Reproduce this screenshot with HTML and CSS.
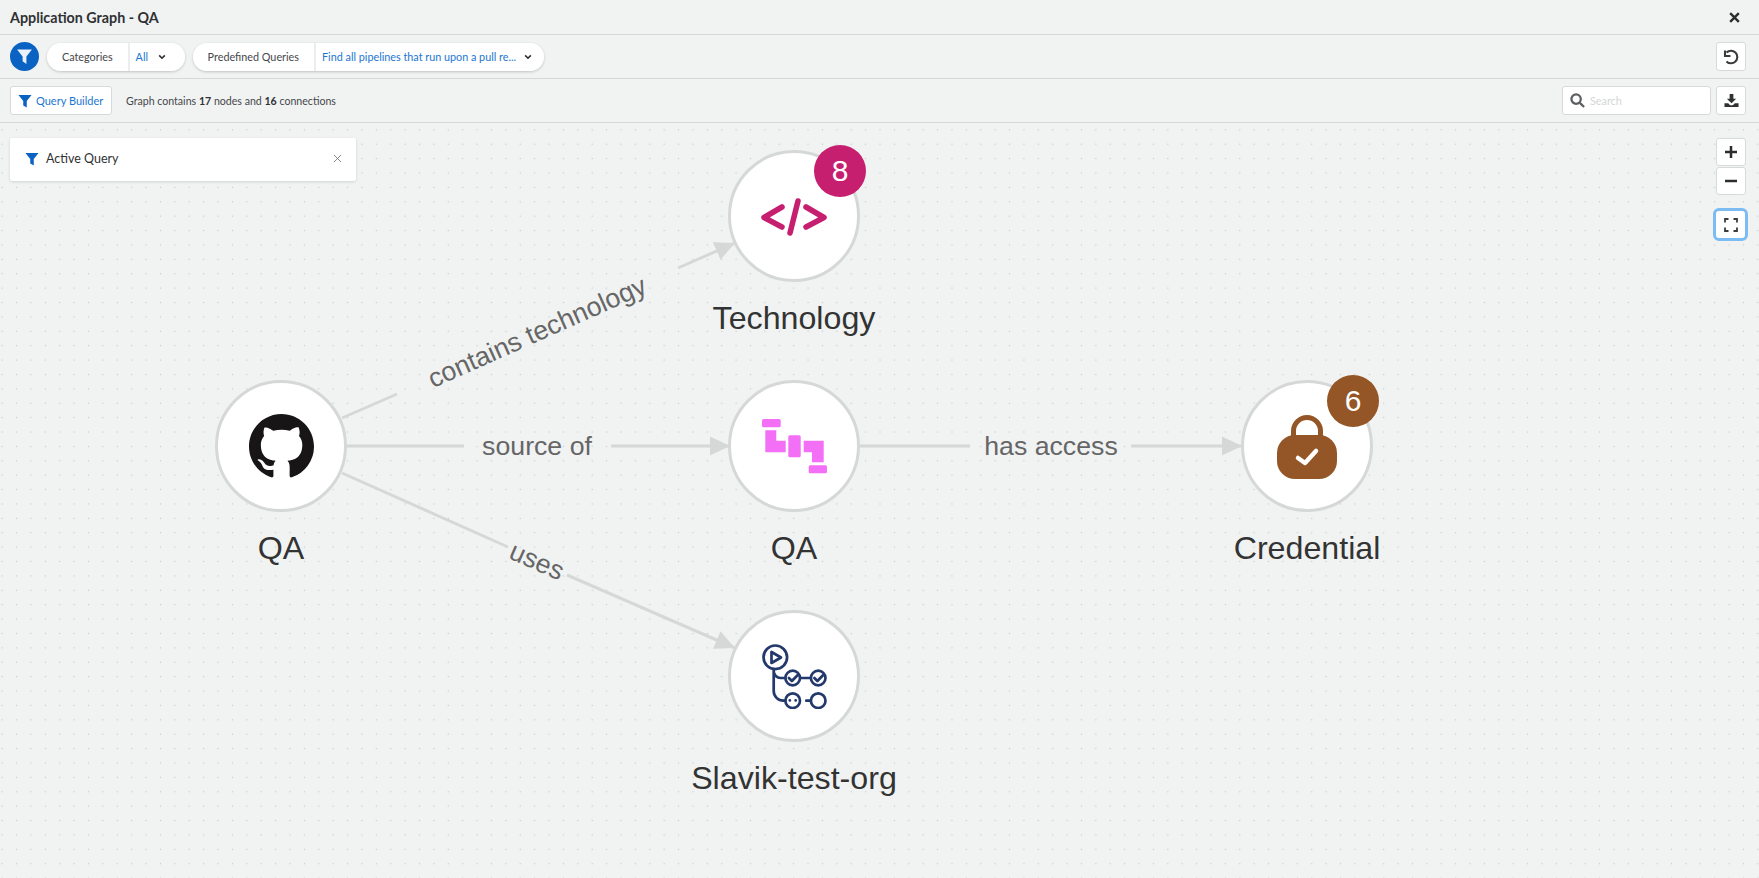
FILE: index.html
```html
<!DOCTYPE html>
<html lang="en">

<head>
    <meta charset="UTF-8">
    <title>Application Graph - QA</title>
    <link rel="stylesheet" href="styles.css">
</head>

<body>
    <header class="title-bar">
        <h1>Application Graph - QA</h1>
        <svg class="close-icon" viewBox="0 0 12 12"><path d="M2 2l8 8M10 2l-8 8"/></svg>
    </header>

    <div class="toolbar filter-bar">
        <span class="filter-round">
            <svg viewBox="0 0 16 16"><path d="M1 1.500h14L9.800 8v7L6.200 12.500V8z"/></svg>
        </span>
        <div class="pill">
            <span class="pill-label">Categories</span>
            <span class="pill-value pill-all">All <svg class="chev" viewBox="0 0 10 6"><path d="M1.500 1l3.500 3.500L8.500 1"/></svg></span>
        </div>
        <div class="pill">
            <span class="pill-label">Predefined Queries</span>
            <span class="pill-value pill-query">Find all pipelines that run upon a pull re... <svg class="chev" viewBox="0 0 10 6"><path d="M1.500 1l3.500 3.500L8.500 1"/></svg></span>
        </div>
        <button class="icon-btn push-right">
            <svg viewBox="0 0 16 16" class="line-icon"><path d="M3.500 3.600A6.300 6.300 0 1 1 3.500 12.400"/><path d="M2 1.500V7h5.500"/></svg>
        </button>
    </div>

    <div class="toolbar query-bar">
        <button class="builder-btn">
            <svg class="funnel" viewBox="0 0 16 16"><path d="M.5 1h15L10 8v7.500L6 13V8z"/></svg>
            Query Builder
        </button>
        <p class="graph-count">Graph contains <b>17</b> nodes and <b>16</b> connections</p>
        <div class="search push-right">
            <svg viewBox="0 0 16 16"><circle cx="6.500" cy="6.500" r="5"/><path d="M10.500 10.500l4.500 4.500"/></svg>
            <span>Search</span>
        </div>
        <button class="icon-btn">
            <svg viewBox="0 0 16 16" class="solid-icon"><path d="M6 1h4v5h3L8 11 3 6h3z"/><path d="M0.5 11h4l2 2h3l2-2h4v4h-15z"/></svg>
        </button>
    </div>

    <main class="canvas">
        <div class="query-card">
            <svg class="funnel" viewBox="0 0 16 16"><path d="M.5 1h15L10 8v7.500L6 13V8z"/></svg>
            <span>Active Query</span>
            <svg class="card-close" viewBox="0 0 10 10"><path d="M1 1l8 8M9 1L1 9"/></svg>
        </div>

        <div class="zoom-controls">
            <div class="zoom-pair">
                <button class="zoom-btn"><svg viewBox="0 0 14 14"><path d="M7 1v12M1 7h12"/></svg></button>
                <button class="zoom-btn"><svg viewBox="0 0 14 14"><path d="M1 7h12"/></svg></button>
            </div>
            <button class="zoom-btn fit-btn"><svg viewBox="0 0 14 14"><path d="M1 4.500V1h3.500M9.500 1H13v3.500M13 9.500V13H9.500M4.500 13H1V9.500"/></svg></button>
        </div>

        <!-- edges, coordinates are relative to the canvas -->
        <svg class="edges" viewBox="0 0 1759 756">
            <defs>
                <marker id="arrow" markerWidth="22" markerHeight="20" refX="20" refY="10" orient="auto" markerUnits="userSpaceOnUse">
                    <path d="M0 0.500L20 10L0 19.500z"/>
                </marker>
            </defs>
            <path d="M342 295L397 271"/>
            <path d="M678 145L735 120" marker-end="url(#arrow)"/>
            <path d="M346 323H464"/>
            <path d="M611 323H730" marker-end="url(#arrow)"/>
            <path d="M859 323H970"/>
            <path d="M1131 323H1242" marker-end="url(#arrow)"/>
            <path d="M342 350L508 424"/>
            <path d="M567 452L735 525" marker-end="url(#arrow)"/>
        </svg>

        <span class="edge-label label-contains">contains technology</span>
        <span class="edge-label label-source">source of</span>
        <span class="edge-label label-access">has access</span>
        <span class="edge-label label-uses">uses</span>

        <div class="node node-repo">
            <div class="disc">
                <svg viewBox="0 0 16 16" class="icon-github"><path d="M8 0C3.580 0 0 3.580 0 8c0 3.540 2.290 6.530 5.470 7.590.4.070.55-.17.55-.38 0-.19-.01-.82-.01-1.490-2.010.37-2.530-.49-2.690-.94-.09-.23-.48-.94-.82-1.130-.28-.15-.68-.52-.01-.53.63-.01 1.080.58 1.230.82.72 1.210 1.870.87 2.330.66.07-.52.28-.87.51-1.070-1.780-.2-3.640-.89-3.640-3.950 0-.87.31-1.590.82-2.150-.08-.2-.36-1.020.08-2.120 0 0 .67-.21 2.200.82.64-.18 1.320-.27 2-.27s1.360.09 2 .27c1.530-1.040 2.200-.82 2.200-.82.44 1.100.16 1.920.08 2.120.51.56.82 1.270.82 2.150 0 3.070-1.870 3.750-3.650 3.950.29.25.54.73.54 1.480 0 1.070-.01 1.930-.01 2.200 0 .21.15.46.55.38A8.010 8.010 0 0 0 16 8c0-4.420-3.580-8-8-8z"/></svg>
            </div>
            <span class="node-name">QA</span>
        </div>

        <div class="node node-tech">
            <div class="disc">
                <svg viewBox="0 0 66 38" class="icon-code"><path d="M21 9L3 19.500 21 29M45 9l18 10.500L45 29M37 3L29 35"/></svg>
                <span class="badge">8</span>
            </div>
            <span class="node-name">Technology</span>
        </div>

        <div class="node node-pipe">
            <div class="disc">
                <svg viewBox="0 0 65 55" class="icon-pipe"><rect width="18.700" height="8.300" rx="1.500"/><path d="M3.300 11.300h11v10.400h9.400v11.600H3.300z"/><rect x="26.300" y="16.300" width="12.400" height="22" rx="1.500"/><path d="M41.700 21.700h20v21.600H50v-10h-8.300z"/><rect x="46.700" y="46.300" width="18.300" height="8" rx="1.500"/></svg>
            </div>
            <span class="node-name">QA</span>
        </div>

        <div class="node node-cred">
            <div class="disc">
                <svg viewBox="0 0 60 64" class="icon-lock"><path class="shackle" d="M16.500 24V16a13.500 13.500 0 0 1 27 0v8"/><rect y="20" width="60" height="44" rx="18"/><path class="tick" d="M21 43l7 5 11-12"/></svg>
                <span class="badge badge-cred">6</span>
            </div>
            <span class="node-name">Credential</span>
        </div>

        <div class="node node-org">
            <div class="disc">
                <svg viewBox="0 0 65 65" class="icon-actions">
                    <circle cx="13.300" cy="13.300" r="11.800"/><path d="M9.500 8v11l9.500-5.500z"/>
                    <path d="M11.700 25v22a9.700 9.700 0 0 0 9.700 9.700h1.600M11.700 27a7 7 0 0 0 7 7h4.500"/>
                    <circle cx="30.700" cy="34" r="7.300"/><path d="M26.900 34l3 3 5.600-5.800"/>
                    <path d="M38.700 34h10"/>
                    <circle cx="56.200" cy="34" r="7.300"/><path d="M52.400 34l3 3 5.600-5.800"/>
                    <circle cx="30.700" cy="56.700" r="7.300"/><path d="M27.800 56.400h.1M33.600 56.400h.1"/>
                    <path d="M44.300 56.700h4.400"/>
                    <circle cx="56.200" cy="56.700" r="7.300"/>
                </svg>
            </div>
            <span class="node-name">Slavik-test-org</span>
        </div>
    </main>
</body>

</html>
```

FILE: styles.css
```css
* {
    box-sizing: border-box;
}

html,
body {
    height: 100%;
}

body {
    margin: 0;
    display: flex;
    flex-direction: column;
    overflow: hidden;
    background-color: #f1f3f3;
    color: #2f3133;
    font-family: Lato, Arial, sans-serif;
    font-size: 10.800px;
}

button {
    font-family: inherit;
    cursor: pointer;
}

.title-bar {
    height: 35px;
    flex: none;
    display: flex;
    align-items: center;
    justify-content: space-between;
    padding: 0 18px 0 10px;
    border-bottom: 1px solid #d6d8d8;
}

.title-bar h1 {
    margin: 0;
    font-size: 14.300px;
    font-weight: 700;
}

.close-icon {
    width: 13px;
    height: 13px;
    fill: none;
    stroke: #2a2c2e;
    stroke-width: 2.200;
}

.toolbar {
    flex: none;
    display: flex;
    align-items: center;
    padding: 0 13px 0 10px;
    border-bottom: 1px solid #d6d8d8;
}

.filter-bar {
    height: 44px;
    gap: 8px;
}

.query-bar {
    height: 44px;
}

.push-right {
    margin-left: auto;
}

.filter-round {
    width: 29px;
    height: 29px;
    border-radius: 50%;
    background-color: #0a63c2;
    display: flex;
    align-items: center;
    justify-content: center;
}

.filter-round svg {
    width: 17px;
    height: 17px;
    fill: #e9f1fa;
}

.pill {
    height: 28px;
    display: flex;
    gap: 2px;
    border-radius: 14px;
    overflow: hidden;
    box-shadow: 0 1px 3px rgba(0, 0, 0, 0.2);
    background-color: #eceeee;
}

.pill-label,
.pill-value {
    display: flex;
    align-items: center;
    white-space: nowrap;
    background-color: #fff;
}

.pill-label {
    padding: 0 15px 0 15px;
    color: #45474a;
}

.pill-value {
    justify-content: space-between;
    color: #1b76d2;
    padding-left: 6px;
}

.pill-all {
    width: 55px;
    padding-right: 19px;
}

.pill-query {
    width: 228px;
    padding-right: 12px;
}

.chev {
    width: 8px;
    height: 6px;
    flex: none;
    fill: none;
    stroke: #2a2c2e;
    stroke-width: 2;
}

.icon-btn {
    width: 30px;
    height: 29px;
    padding: 0;
    display: flex;
    align-items: center;
    justify-content: center;
    background-color: #fff;
    border: 1px solid #d8dada;
    border-radius: 3px;
}

.line-icon {
    width: 16px;
    height: 16px;
    fill: none;
    stroke: #3a3c3e;
    stroke-width: 2.100;
}

.solid-icon {
    width: 15px;
    height: 15px;
    fill: #2f3133;
}

.builder-btn {
    width: 102px;
    height: 29px;
    padding: 0 0 0 7px;
    display: flex;
    align-items: center;
    gap: 4px;
    white-space: nowrap;
    color: #1b76d2;
    font-size: 11px;
    background-color: #fff;
    border: 1px solid #d8dada;
    border-radius: 3px;
}

.funnel {
    width: 14px;
    height: 14px;
    flex: none;
    fill: #0a63c2;
}

.graph-count {
    margin: 0 0 0 14px;
    font-size: 10.600px;
    color: #45474a;
}

.graph-count b {
    color: #2f3133;
}

.search {
    width: 149px;
    height: 29px;
    display: flex;
    align-items: center;
    gap: 5px;
    padding-left: 7px;
    margin-right: 5px;
    color: #d4d6d6;
    background-color: #fff;
    border: 1px solid #d8dada;
    border-radius: 3px;
}

.search svg {
    width: 15px;
    height: 15px;
    fill: none;
    stroke: #5c5e60;
    stroke-width: 2.400;
}

.canvas {
    position: relative;
    flex: 1;
    overflow: hidden;
    background-image: radial-gradient(circle, #c6caca 0.7px, transparent 1px);
    background-size: 14.400px 14.400px;
    background-position: -5px -0.4px;
}

.query-card {
    position: absolute;
    left: 10px;
    top: 15px;
    width: 346px;
    height: 43px;
    display: flex;
    align-items: center;
    gap: 7px;
    padding: 0 14px 2px 15px;
    font-size: 12.500px;
    background-color: #fff;
    border-radius: 2px;
    box-shadow: 0 1px 3px rgba(0, 0, 0, 0.14);
}

.card-close {
    width: 9px;
    height: 9px;
    margin-left: auto;
    fill: none;
    stroke: #77797b;
    stroke-width: 1;
}

.zoom-controls {
    position: absolute;
    right: 11px;
    top: 15px;
    display: flex;
    flex-direction: column;
    align-items: center;
    gap: 13px;
}

.zoom-pair {
    display: flex;
    flex-direction: column;
    gap: 1px;
}

.zoom-btn {
    width: 30px;
    height: 28px;
    padding: 0;
    display: flex;
    align-items: center;
    justify-content: center;
    background-color: #fff;
    border: 1px solid #d8dada;
    border-radius: 3px;
}

.zoom-btn svg {
    width: 14px;
    height: 14px;
    fill: none;
    stroke: #2a2c2e;
    stroke-width: 2.500;
}

.fit-btn {
    width: 35px;
    height: 33px;
    border: 3px solid #7cbcf2;
    border-radius: 6px;
}

.fit-btn svg {
    stroke: #3a3c3e;
    stroke-width: 1.800;
}

.edges {
    position: absolute;
    left: 0;
    top: 0;
    width: 1759px;
    height: 756px;
    fill: none;
    stroke: #d6d8d8;
    stroke-width: 3;
}

.edges marker path {
    fill: #d6d8d8;
    stroke: none;
}

.edge-label {
    position: absolute;
    font-family: "Liberation Sans", Arial, sans-serif;
    font-size: 26.700px;
    line-height: 30px;
    color: #666;
    white-space: nowrap;
    transform: translate(-50%, -50%);
}

.label-contains {
    left: 537px;
    top: 209px;
    transform: translate(-50%, -50%) rotate(-24deg);
}

.label-source {
    left: 537px;
    top: 323px;
}

.label-access {
    left: 1051px;
    top: 323px;
}

.label-uses {
    left: 537px;
    top: 438px;
    transform: translate(-50%, -50%) rotate(24deg);
}

.node {
    position: absolute;
    width: 240px;
    margin-left: -120px;
    display: flex;
    flex-direction: column;
    align-items: center;
    gap: 16px;
}

.node-repo {
    left: 281px;
    top: 257px;
}

.node-tech {
    left: 794px;
    top: 27px;
}

.node-pipe {
    left: 794px;
    top: 257px;
}

.node-cred {
    left: 1307px;
    top: 257px;
}

.node-org {
    left: 794px;
    top: 487px;
}

.disc {
    position: relative;
    width: 132px;
    height: 132px;
    display: flex;
    align-items: center;
    justify-content: center;
    background-color: #fff;
    border: 3px solid #d6d8d8;
    border-radius: 50%;
}

.node-name {
    font-family: "Liberation Sans", Arial, sans-serif;
    font-size: 32.200px;
    line-height: 40px;
    color: #333;
}

.badge {
    position: absolute;
    right: -9px;
    top: -8px;
    width: 52px;
    height: 52px;
    display: flex;
    align-items: center;
    justify-content: center;
    font-family: "Liberation Sans", Arial, sans-serif;
    font-size: 30px;
    color: #fff;
    background-color: #c71f70;
    border-radius: 50%;
}

.badge-cred {
    background-color: #945626;
}

.icon-github {
    width: 65px;
    height: 65px;
    fill: #171516;
}

.icon-code {
    width: 66px;
    height: 38px;
    margin-top: 2px;
    fill: none;
    stroke: #c71f70;
    stroke-width: 5.500;
    stroke-linecap: round;
    stroke-linejoin: round;
}

.icon-pipe {
    width: 65px;
    height: 55px;
    fill: #f36ff6;
}

.icon-lock {
    width: 60px;
    height: 64px;
    margin-top: 2px;
    fill: #945626;
}

.icon-lock .shackle {
    fill: none;
    stroke: #945626;
    stroke-width: 5;
}

.icon-lock .tick {
    fill: none;
    stroke: #fff;
    stroke-width: 4.500;
    stroke-linecap: round;
    stroke-linejoin: round;
}

.icon-actions {
    width: 65px;
    height: 65px;
    fill: none;
    stroke: #23386b;
    stroke-width: 2.700;
    stroke-linecap: round;
    stroke-linejoin: round;
}
```
